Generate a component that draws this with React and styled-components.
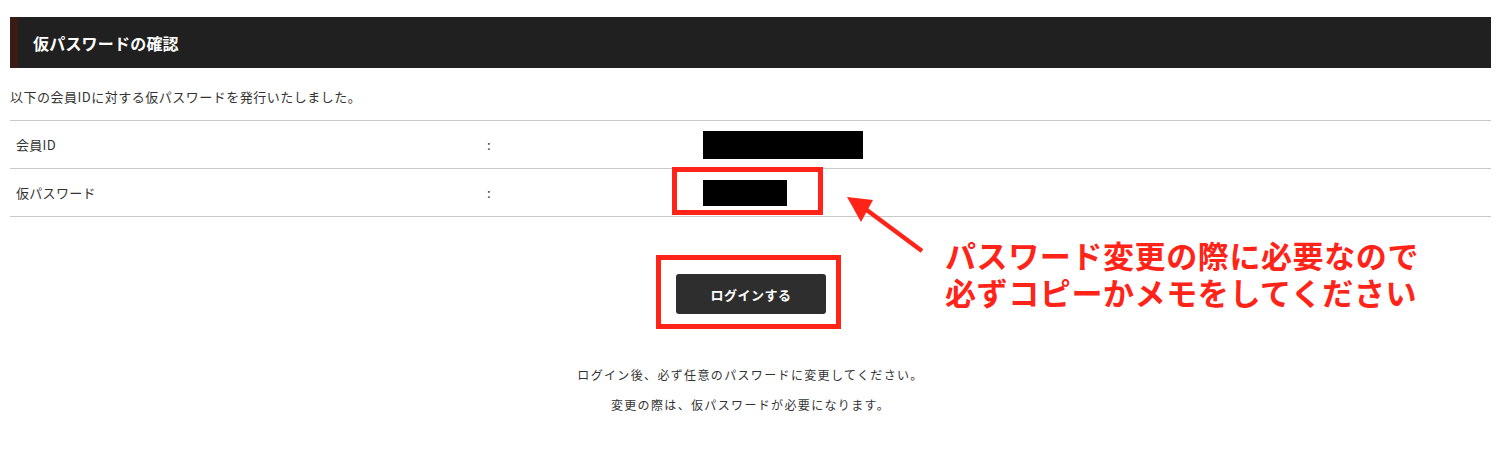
import React from 'react'
import styled, { createGlobalStyle } from 'styled-components'

const COLORS = {
  TEXT: '#333333',
  HEADER: '#202020',
  ACCENT: '#3b1c14',
  LINE: '#c8c8c8',
  BUTTON: '#2e2e2e',
  MARK: '#ff2318'
}

const GlobalStyle = createGlobalStyle`
  html, body {
    margin: 0;
    padding: 0;
    background: #ffffff;
  }
  body {
    font-family: "Noto Sans CJK JP", "Noto Sans", sans-serif;
    color: ${COLORS.TEXT};
  }
`

const ScPage = styled.div`
  position: relative;
  width: 1510px;
  height: 450px;
  padding: 17px 19px 0 10px;
  box-sizing: border-box;
  overflow: hidden;
`

const ScHeader = styled.h2`
  margin: 0;
  height: 51px;
  display: flex;
  align-items: center;
  padding-left: 15px;
  background: ${COLORS.HEADER};
  border-left: 8px solid ${COLORS.ACCENT};
  color: #ffffff;
  font-size: 16px;
  font-weight: 700;
  letter-spacing: 0.2px;
`

const ScIntro = styled.p`
  margin: 0;
  padding: 20px 0 14px;
  font-size: 13px;
  line-height: 18px;
  letter-spacing: 0.5px;
`

const ScTable = styled.div`
  border-bottom: 1px solid ${COLORS.LINE};
`

const ScRow = styled.div`
  display: grid;
  grid-template-columns: 473px 220px 1fr;
  align-items: center;
  height: 47px;
  border-top: 1px solid ${COLORS.LINE};
  font-size: 13px;
  letter-spacing: 0.3px;
`

const ScLabel = styled.div`
  padding-left: 6px;
`

const ScColon = styled.div`
  padding-left: 4px;
`

const ScRedacted = styled.div`
  width: ${props => props.w}px;
  height: ${props => props.h}px;
  background: #000000;
`

const ScActions = styled.div`
  display: flex;
  justify-content: center;
  padding: 57px 0 0;
`

const ScButton = styled.button`
  width: 150px;
  height: 40px;
  margin-left: 1px;
  border: none;
  border-radius: 3px;
  background: ${COLORS.BUTTON};
  color: #ffffff;
  font-family: inherit;
  font-size: 13px;
  font-weight: 700;
  letter-spacing: 0.5px;
  cursor: pointer;
`

const ScNotes = styled.div`
  padding-top: 52px;
  display: flex;
  flex-direction: column;
  align-items: center;
  gap: 12px;
  font-size: 12px;
  line-height: 18px;
  letter-spacing: 1.35px;
`

const ScNote = styled.p`
  margin: 0;
`

const ScMarkBox = styled.div`
  position: absolute;
  left: ${props => props.x}px;
  top: ${props => props.y}px;
  width: ${props => props.w}px;
  height: ${props => props.h}px;
  border: 5px solid ${COLORS.MARK};
  box-sizing: border-box;
  pointer-events: none;
`

const ScArrow = styled.svg`
  position: absolute;
  left: 840px;
  top: 190px;
  pointer-events: none;
`

const ScCallout = styled.div`
  position: absolute;
  left: 945px;
  top: 236px;
  color: ${COLORS.MARK};
  font-size: 31px;
  font-weight: 700;
  line-height: 37px;
  letter-spacing: 0.6px;
  white-space: nowrap;
`

const App = () => (
  <>
    <GlobalStyle />
    <ScPage>
      <ScHeader>仮パスワードの確認</ScHeader>
      <ScIntro>以下の会員IDに対する仮パスワードを発行いたしました。</ScIntro>
      <ScTable>
        <ScRow>
          <ScLabel>会員ID</ScLabel>
          <ScColon>:</ScColon>
          <ScRedacted w={160} h={28} />
        </ScRow>
        <ScRow>
          <ScLabel>仮パスワード</ScLabel>
          <ScColon>:</ScColon>
          <ScRedacted w={84} h={26} />
        </ScRow>
      </ScTable>
      <ScActions>
        <ScButton type="button">ログインする</ScButton>
      </ScActions>
      <ScNotes>
        <ScNote>ログイン後、必ず任意のパスワードに変更してください。</ScNote>
        <ScNote>変更の際は、仮パスワードが必要になります。</ScNote>
      </ScNotes>

      <ScMarkBox x={672} y={167} w={151} h={48} />
      <ScMarkBox x={656} y={255} w={185} h={74} />
      <ScArrow width="90" height="70" viewBox="0 0 90 70">
        <line x1="82" y1="61" x2="20" y2="15" stroke={COLORS.MARK} strokeWidth="4.5" />
        <polygon points="7,7 33,10 21,32" fill={COLORS.MARK} />
      </ScArrow>
      <ScCallout>
        パスワード変更の際に必要なので
        <br />
        必ずコピーかメモをしてください
      </ScCallout>
    </ScPage>
  </>
)

export default App
